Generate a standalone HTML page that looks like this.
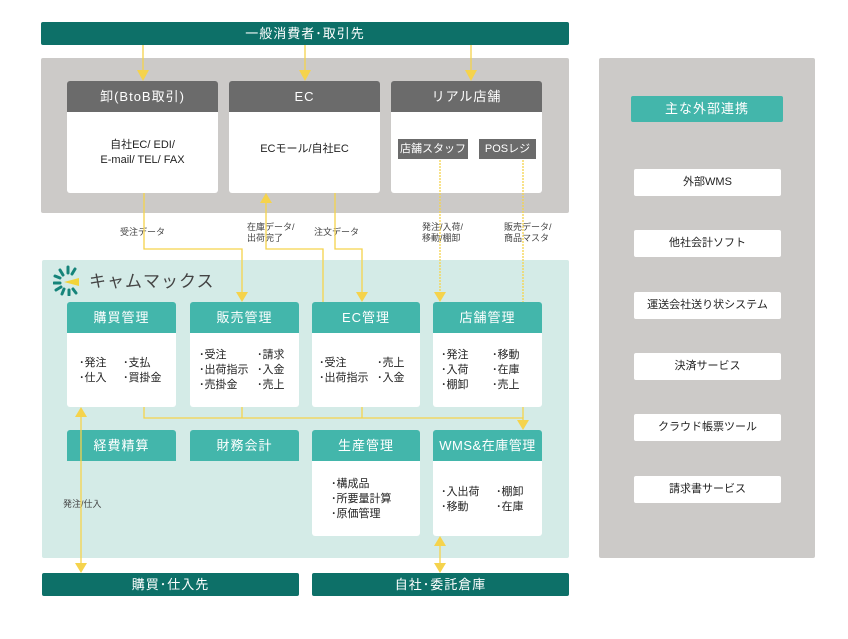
<!DOCTYPE html>
<html><head><meta charset="utf-8"><style>
*{margin:0;padding:0;box-sizing:border-box}
body{width:848px;height:639px;background:#fff;position:relative;overflow:hidden;font-family:"Liberation Sans","Noto Sans CJK JP",sans-serif;color:#333}
.a{position:absolute}
.bar{background:#0d7068;color:#fff;font-size:13px;text-align:center;line-height:23px;border-radius:2px;letter-spacing:1px}
.gh{background:#6b6b6b;color:#fff;font-size:13px;text-align:center;line-height:31px;border-radius:3px 3px 0 0;letter-spacing:1px}
.wb{background:#fff;border-radius:0 0 3px 3px}
.th{background:#43b6ab;color:#fff;font-size:13px;text-align:center;line-height:31px;border-radius:3px 3px 0 0;letter-spacing:1px}
.t{font-size:11px;line-height:15px;color:#222}
.s{font-size:9px;line-height:11px;color:#444}
.ext{background:#fff;width:147px;height:27px;left:634px;font-size:11px;text-align:center;line-height:27px;border-radius:2px;color:#222}
.tag{background:#6b6b6b;color:#fff;font-size:11px;line-height:20px;text-align:center}
</style></head><body>
<div class="a bar" style="left:41px;top:22px;width:528px;height:23px">一般消費者･取引先</div>
<div class="a" style="left:41px;top:58px;width:528px;height:155px;background:#cccac8;border-radius:2px"></div>
<div class="a gh" style="left:67px;top:81px;width:151px;height:31px">卸(BtoB取引)</div>
<div class="a wb" style="left:67px;top:112px;width:151px;height:81px"></div>
<div class="a t" style="left:67px;top:138px;width:151px;text-align:center">自社EC/ EDI/<br>E-mail/ TEL/ FAX</div>
<div class="a gh" style="left:229px;top:81px;width:151px;height:31px">EC</div>
<div class="a wb" style="left:229px;top:112px;width:151px;height:81px"></div>
<div class="a t" style="left:229px;top:142px;width:151px;text-align:center">ECモール/自社EC</div>
<div class="a gh" style="left:391px;top:81px;width:151px;height:31px">リアル店舗</div>
<div class="a wb" style="left:391px;top:112px;width:151px;height:81px"></div>
<div class="a tag" style="left:398px;top:139px;width:70px">店舗スタッフ</div>
<div class="a tag" style="left:479px;top:139px;width:57px">POSレジ</div>

<div class="a s" style="left:120px;top:227px">受注データ</div>
<div class="a s" style="left:247px;top:222px">在庫データ/<br>出荷完了</div>
<div class="a s" style="left:314px;top:227px">注文データ</div>
<div class="a s" style="left:422px;top:222px">発注/入荷/<br>移動/棚卸</div>
<div class="a s" style="left:504px;top:222px">販売データ/<br>商品マスタ</div>

<div class="a" style="left:42px;top:260px;width:527px;height:298px;background:#d4ebe7;border-radius:2px"></div>
<svg class="a" style="left:53px;top:264px" width="30" height="32" viewBox="0 0 30 32">
<g stroke="#16847a" stroke-width="3" stroke-linecap="round">
<line x1="15" y1="3" x2="15" y2="9"/><line x1="7" y1="6" x2="10" y2="11"/><line x1="22" y1="5" x2="19" y2="10"/>
<line x1="2" y1="12" x2="7" y2="14"/><line x1="1" y1="19" x2="7" y2="19"/><line x1="3" y1="26" x2="8" y2="23"/>
<line x1="9" y1="30" x2="11" y2="25"/><line x1="16" y1="31" x2="16" y2="26"/><line x1="23" y1="29" x2="20" y2="25"/></g>
<polygon points="11,18 26,14 26,22" fill="#f2d43a"/></svg>
<div class="a" style="left:89px;top:267px;font-size:17px;color:#444;letter-spacing:1px">キャムマックス</div>

<div class="a th" style="left:67px;top:302px;width:109px">購買管理</div>
<div class="a wb" style="left:67px;top:333px;width:109px;height:74px"></div>
<div class="a t" style="left:79px;top:356px">･発注<br>･仕入</div><div class="a t" style="left:123px;top:356px">･支払<br>･買掛金</div>
<div class="a th" style="left:190px;top:302px;width:109px">販売管理</div>
<div class="a wb" style="left:190px;top:333px;width:109px;height:74px"></div>
<div class="a t" style="left:199px;top:348px">･受注<br>･出荷指示<br>･売掛金</div><div class="a t" style="left:257px;top:348px">･請求<br>･入金<br>･売上</div>
<div class="a th" style="left:312px;top:302px;width:108px">EC管理</div>
<div class="a wb" style="left:312px;top:333px;width:108px;height:74px"></div>
<div class="a t" style="left:319px;top:356px">･受注<br>･出荷指示</div><div class="a t" style="left:377px;top:356px">･売上<br>･入金</div>
<div class="a th" style="left:433px;top:302px;width:109px">店舗管理</div>
<div class="a wb" style="left:433px;top:333px;width:109px;height:74px"></div>
<div class="a t" style="left:441px;top:348px">･発注<br>･入荷<br>･棚卸</div><div class="a t" style="left:492px;top:348px">･移動<br>･在庫<br>･売上</div>

<div class="a th" style="left:67px;top:430px;width:109px">経費精算</div>
<div class="a th" style="left:190px;top:430px;width:109px">財務会計</div>
<div class="a th" style="left:312px;top:430px;width:108px">生産管理</div>
<div class="a wb" style="left:312px;top:461px;width:108px;height:75px"></div>
<div class="a t" style="left:331px;top:477px">･構成品<br>･所要量計算<br>･原価管理</div>
<div class="a th" style="left:433px;top:430px;width:109px;letter-spacing:0.5px">WMS&amp;在庫管理</div>
<div class="a wb" style="left:433px;top:461px;width:109px;height:75px"></div>
<div class="a t" style="left:441px;top:485px">･入出荷<br>･移動</div><div class="a t" style="left:496px;top:485px">･棚卸<br>･在庫</div>
<div class="a s" style="left:63px;top:499px">発注/仕入</div>

<div class="a bar" style="left:42px;top:573px;width:257px;height:23px">購買･仕入先</div>
<div class="a bar" style="left:312px;top:573px;width:257px;height:23px">自社･委託倉庫</div>

<div class="a" style="left:599px;top:58px;width:216px;height:500px;background:#cccac8;border-radius:2px"></div>
<div class="a" style="left:631px;top:96px;width:152px;height:26px;background:#43b6ab;color:#fff;font-size:13px;text-align:center;line-height:26px;border-radius:2px;letter-spacing:1px">主な外部連携</div>
<div class="a ext" style="top:169px">外部WMS</div>
<div class="a ext" style="top:230px">他社会計ソフト</div>
<div class="a ext" style="top:292px">運送会社送り状システム</div>
<div class="a ext" style="top:353px">決済サービス</div>
<div class="a ext" style="top:414px">クラウド帳票ツール</div>
<div class="a ext" style="top:476px">請求書サービス</div>

<svg class="a" style="left:0;top:0" width="848" height="639">
<g stroke="#f5d34c" stroke-width="1.3" fill="none">
<line x1="143" y1="45" x2="143" y2="75"/><line x1="305" y1="45" x2="305" y2="75"/><line x1="471" y1="45" x2="471" y2="75"/>
<polyline points="144,193 144,249 242,249 242,296"/>
<polyline points="266,198 266,249 323,249 323,302"/>
<polyline points="335,193 335,249 362,249 362,296"/>
<line x1="440" y1="160" x2="440" y2="296" stroke-dasharray="2,1"/>
<line x1="523" y1="160" x2="523" y2="302" stroke-dasharray="2,1"/>
<polyline points="144,407 144,418 523,418 523,424"/>
<line x1="242" y1="407" x2="242" y2="418"/><line x1="362" y1="407" x2="362" y2="418"/><line x1="523" y1="407" x2="523" y2="418"/>
<line x1="81" y1="412" x2="81" y2="567"/>
<line x1="440" y1="541" x2="440" y2="567"/>
</g>
<g fill="#f5d34c">
<polygon points="137,70 149,70 143,81"/><polygon points="299,70 311,70 305,81"/><polygon points="465,70 477,70 471,81"/>
<polygon points="236,292 248,292 242,302"/><polygon points="260,203 272,203 266,193"/>
<polygon points="356,292 368,292 362,302"/><polygon points="434,292 446,292 440,302"/>
<polygon points="517,420 529,420 523,430"/>
<polygon points="75,417 87,417 81,407"/><polygon points="75,563 87,563 81,573"/>
<polygon points="434,546 446,546 440,536"/><polygon points="434,563 446,563 440,573"/>
</g></svg>
</body></html>
